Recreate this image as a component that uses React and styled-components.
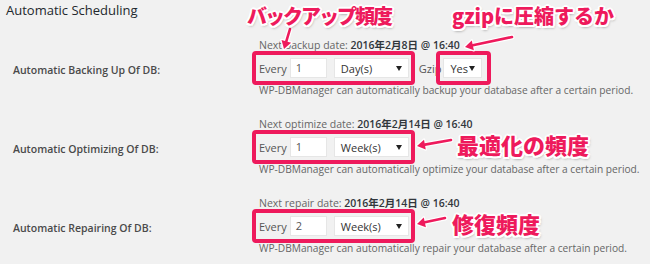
import React from "react";
import styled, { createGlobalStyle } from "styled-components";

const PINK = "#ee1a5c";

const GlobalStyle = createGlobalStyle`
  html, body {
    margin: 0;
    padding: 0;
    background: #f1f1f1;
  }
  body {
    font-family: "Open Sans", "Noto Sans CJK JP", sans-serif;
  }
`;

const Page = styled.div`
  position: relative;
  width: 650px;
  height: 264px;
  box-sizing: border-box;
  padding: 3px 0 0 6px;
  overflow: hidden;
  background: #f1f1f1;
`;

const Heading = styled.h3`
  margin: 0;
  font-size: 13px;
  line-height: 14px;
  font-weight: 500;
  color: #23282d;
`;

const Table = styled.div`
  margin-top: 21px;
  display: flex;
  flex-direction: column;
  gap: 20px;
`;

const Row = styled.div`
  display: grid;
  grid-template-columns: 253px 1fr;
`;

const Label = styled.div`
  padding: 25px 0 0 7px;
  font-size: 10.5px;
  line-height: 14px;
  font-weight: 600;
  color: #4a4a4a;
`;

const Field = styled.div`
  display: flex;
  flex-direction: column;
`;

const NextDate = styled.div`
  font-size: 10.5px;
  line-height: 14px;
  color: #666;
  white-space: nowrap;

  strong {
    font-weight: 600;
    color: #32373c;
  }
`;

const Controls = styled.div`
  display: flex;
  align-items: center;
  height: 20px;
  margin-top: 6px;
  font-size: 11px;
  color: #555;
`;

const Highlight = styled.div`
  position: relative;
  display: inline-flex;
  align-items: center;
  flex: none;
  border: 4px solid ${PINK};
  border-radius: 4px;
  padding: 3px ${(p) => p.$right || 2}px 3px 3px;
  margin: -7px 0 -7px ${(p) => p.$left ?? -7}px;
`;

const NumberInput = styled.div`
  box-sizing: border-box;
  width: 37px;
  height: 20px;
  padding: 0 5px;
  margin-left: 3px;
  background: #fff;
  border: 1px solid #e6e6e6;
  font-size: 11px;
  line-height: 18px;
  color: #555;
`;

const SelectBox = styled.div`
  box-sizing: border-box;
  display: flex;
  flex: none;
  align-items: center;
  justify-content: space-between;
  width: ${(p) => p.$width}px;
  height: 20px;
  margin-left: ${(p) => p.$offset || 0}px;
  padding: 0 6px 0 6px;
  background: #fff;
  border: 1px solid #e6e6e6;
  font-size: 11px;
  color: #333;
`;

const Caret = styled.span`
  width: 0;
  height: 0;
  border-left: 3px solid transparent;
  border-right: 3px solid transparent;
  border-top: 5px solid #222;
`;

const GzipLabel = styled.span`
  margin-left: 4px;
`;

const Description = styled.div`
  margin-top: 5px;
  font-size: 10.2px;
  line-height: 14px;
  color: #666;
  white-space: nowrap;
`;

const Callout = styled.span`
  position: absolute;
  left: ${(p) => p.$x}px;
  top: ${(p) => p.$y}px;
  font-family: "Noto Sans CJK JP", "Open Sans", sans-serif;
  font-size: ${(p) => p.$size || 22}px;
  line-height: 1;
  font-weight: 900;
  letter-spacing: ${(p) => p.$spacing || 0}px;
  color: ${PINK};
  white-space: nowrap;
  text-shadow:
    -1.5px -1.5px 0 #fff, 1.5px -1.5px 0 #fff, -1.5px 1.5px 0 #fff, 1.5px 1.5px 0 #fff,
    0 -2px 0 #fff, 0 2px 0 #fff, -2px 0 0 #fff, 2px 0 0 #fff,
    1px 2px 3px rgba(0, 0, 0, 0.5);
`;

const Overlay = styled.svg`
  position: absolute;
  left: 0;
  top: 0;
  pointer-events: none;
`;

function Select({ value, width, offset }) {
  return (
    <SelectBox $width={width} $offset={offset}>
      <span>{value}</span>
      <Caret />
    </SelectBox>
  );
}

function Arrow({ from, to }) {
  const [x1, y1] = from;
  const [x2, y2] = to;
  const ang = Math.atan2(y2 - y1, x2 - x1);
  const len = 8;
  const w = 5;
  const bx = x2 - Math.cos(ang) * len;
  const by = y2 - Math.sin(ang) * len;
  const nx = -Math.sin(ang) * w;
  const ny = Math.cos(ang) * w;
  const head = `${x2},${y2} ${bx + nx},${by + ny} ${bx - nx},${by - ny}`;
  return (
    <g>
      <line x1={x1} y1={y1} x2={bx} y2={by} stroke="#fff" strokeWidth="5" strokeLinecap="round" />
      <polygon points={head} fill="#fff" stroke="#fff" strokeWidth="2.5" strokeLinejoin="round" />
      <line x1={x1} y1={y1} x2={bx} y2={by} stroke={PINK} strokeWidth="2.6" strokeLinecap="round" />
      <polygon points={head} fill={PINK} />
    </g>
  );
}

const rows = [
  {
    label: "Automatic Backing Up Of DB:",
    next: "Next backup date:",
    date: "2016年2月8日 @ 16:40",
    every: "1",
    unit: "Day(s)",
    gzip: true,
    text: "WP-DBManager can automatically backup your database after a certain period.",
  },
  {
    label: "Automatic Optimizing Of DB:",
    next: "Next optimize date:",
    date: "2016年2月14日 @ 16:40",
    every: "1",
    unit: "Week(s)",
    text: "WP-DBManager can automatically optimize your database after a certain period.",
  },
  {
    label: "Automatic Repairing Of DB:",
    next: "Next repair date:",
    date: "2016年2月14日 @ 16:40",
    every: "2",
    unit: "Week(s)",
    text: "WP-DBManager can automatically repair your database after a certain period.",
  },
];

export default function App() {
  return (
    <Page>
      <GlobalStyle />
      <Heading>Automatic Scheduling</Heading>
      <Table>
        {rows.map((row) => (
          <Row key={row.label}>
            <Label>{row.label}</Label>
            <Field>
              <NextDate>
                {row.next} <strong>{row.date}</strong>
              </NextDate>
              <Controls>
                <Highlight>
                  <span>Every</span>
                  <NumberInput>{row.every}</NumberInput>
                  <Select value={row.unit} width={75} offset={7} />
                </Highlight>
                {row.gzip && (
                  <>
                    <GzipLabel>Gzip</GzipLabel>
                    <Highlight $left={-5} $right={5}>
                      <Select value="Yes" width={39} />
                    </Highlight>
                  </>
                )}
              </Controls>
              <Description>{row.text}</Description>
            </Field>
          </Row>
        ))}
      </Table>

      <Overlay width="650" height="264" viewBox="0 0 650 264">
        <Arrow from={[290, 29]} to={[284, 49]} />
        <Arrow from={[512, 37]} to={[465, 47]} />
        <Arrow from={[451, 140]} to={[417, 146]} />
        <Arrow from={[445, 218]} to={[417, 224]} />
      </Overlay>

      <Callout $x={247} $y={6} $size={20} $spacing={-2}>バックアップ頻度</Callout>
      <Callout $x={452} $y={6} $size={20}>gzipに圧縮するか</Callout>
      <Callout $x={457} $y={133} $size={22}>最適化の頻度</Callout>
      <Callout $x={452} $y={212} $size={22}>修復頻度</Callout>
    </Page>
  );
}
